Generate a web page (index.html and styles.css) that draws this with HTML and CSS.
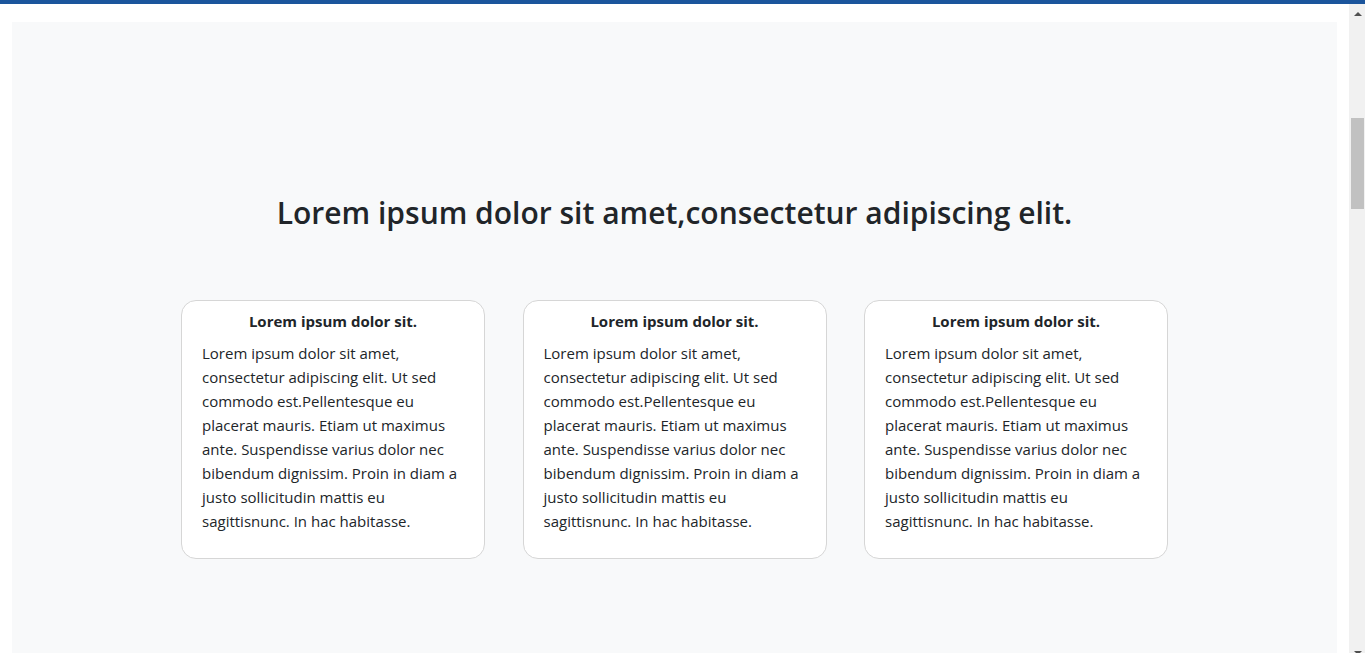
FILE: index.html
```html
<!DOCTYPE html>
<html lang="en">
<head>
<meta charset="utf-8">
<title>Features</title>
<link rel="stylesheet" href="styles.css">
</head>
<body>
<div class="topbar"></div>
<div class="frame">
  <main class="page">
    <section class="features">
      <h2 class="features-title">Lorem ipsum dolor sit amet,consectetur adipiscing elit.</h2>
      <div class="card-row">
        <article class="card">
          <h3 class="card-title">Lorem ipsum dolor sit.</h3>
          <p class="card-text">Lorem ipsum dolor sit amet, consectetur adipiscing elit. Ut sed commodo est.Pellentesque eu placerat mauris. Etiam ut maximus ante. Suspendisse varius dolor nec bibendum dignissim. Proin in diam a justo sollicitudin mattis eu sagittisnunc. In hac habitasse.</p>
        </article>
        <article class="card">
          <h3 class="card-title">Lorem ipsum dolor sit.</h3>
          <p class="card-text">Lorem ipsum dolor sit amet, consectetur adipiscing elit. Ut sed commodo est.Pellentesque eu placerat mauris. Etiam ut maximus ante. Suspendisse varius dolor nec bibendum dignissim. Proin in diam a justo sollicitudin mattis eu sagittisnunc. In hac habitasse.</p>
        </article>
        <article class="card">
          <h3 class="card-title">Lorem ipsum dolor sit.</h3>
          <p class="card-text">Lorem ipsum dolor sit amet, consectetur adipiscing elit. Ut sed commodo est.Pellentesque eu placerat mauris. Etiam ut maximus ante. Suspendisse varius dolor nec bibendum dignissim. Proin in diam a justo sollicitudin mattis eu sagittisnunc. In hac habitasse.</p>
        </article>
      </div>
    </section>
  </main>
  <div class="scrollbar" aria-hidden="true">
    <div class="scroll-btn"><span class="arrow arrow-up"></span></div>
    <div class="scroll-track"><div class="scroll-thumb"></div></div>
    <div class="scroll-btn"><span class="arrow arrow-down"></span></div>
  </div>
</div>
</body>
</html>
```

FILE: styles.css
```css
html, body {
  margin: 0;
  height: 100%;
  overflow: hidden;
  background: #fff;
  font-family: "Open Sans", "Liberation Sans", sans-serif;
  color: #212529;
}

.topbar {
  height: 4px;
  background: #1b559c;
}

.frame {
  display: flex;
  height: 659px;
}

.page {
  flex: 1 1 auto;
  min-width: 0;
  overflow: hidden;
}

/* window scrollbar */
.scrollbar {
  flex: 0 0 16px;
  display: flex;
  flex-direction: column;
  background: #f1f1f1;
}

.scroll-btn {
  flex: 0 0 16px;
  display: flex;
  justify-content: flex-start;
  align-items: center;
}

.arrow {
  width: 0;
  height: 0;
  margin-left: 5px;
  border-left: 4px solid transparent;
  border-right: 4px solid transparent;
}

.arrow-up {
  border-bottom: 4px solid #505050;
  margin-top: 4px;
}

.arrow-down {
  border-top: 4px solid #505050;
  margin-top: -4px;
}

.scroll-track {
  flex: 1 1 auto;
  padding: 98px 1px 0 2px;
}

.scroll-thumb {
  height: 91px;
  background: #c1c1c1;
}

/* content */
.features {
  margin: 18px 12px 0;
  padding: 173px 0 120px;
  background: #f8f9fa;
  min-height: 700px;
  box-sizing: border-box;
}

.features-title {
  margin: 0 0 69px;
  text-align: center;
  font-size: 30px;
  font-weight: 600;
  line-height: 1.2;
}

.card-row {
  display: flex;
  justify-content: center;
  gap: 37.5px;
}

.card {
  width: 304px;
  box-sizing: border-box;
  background: #fff;
  border: 1px solid #d6d6d6;
  border-radius: 15px;
  padding: 8px 20px 9px;
}

.card-title {
  margin: 0 0 8px;
  text-align: center;
  font-size: 15px;
  font-weight: 700;
  line-height: 24px;
}

.card-text {
  margin: 0 0 16px;
  font-size: 15px;
  line-height: 24px;
}
```
